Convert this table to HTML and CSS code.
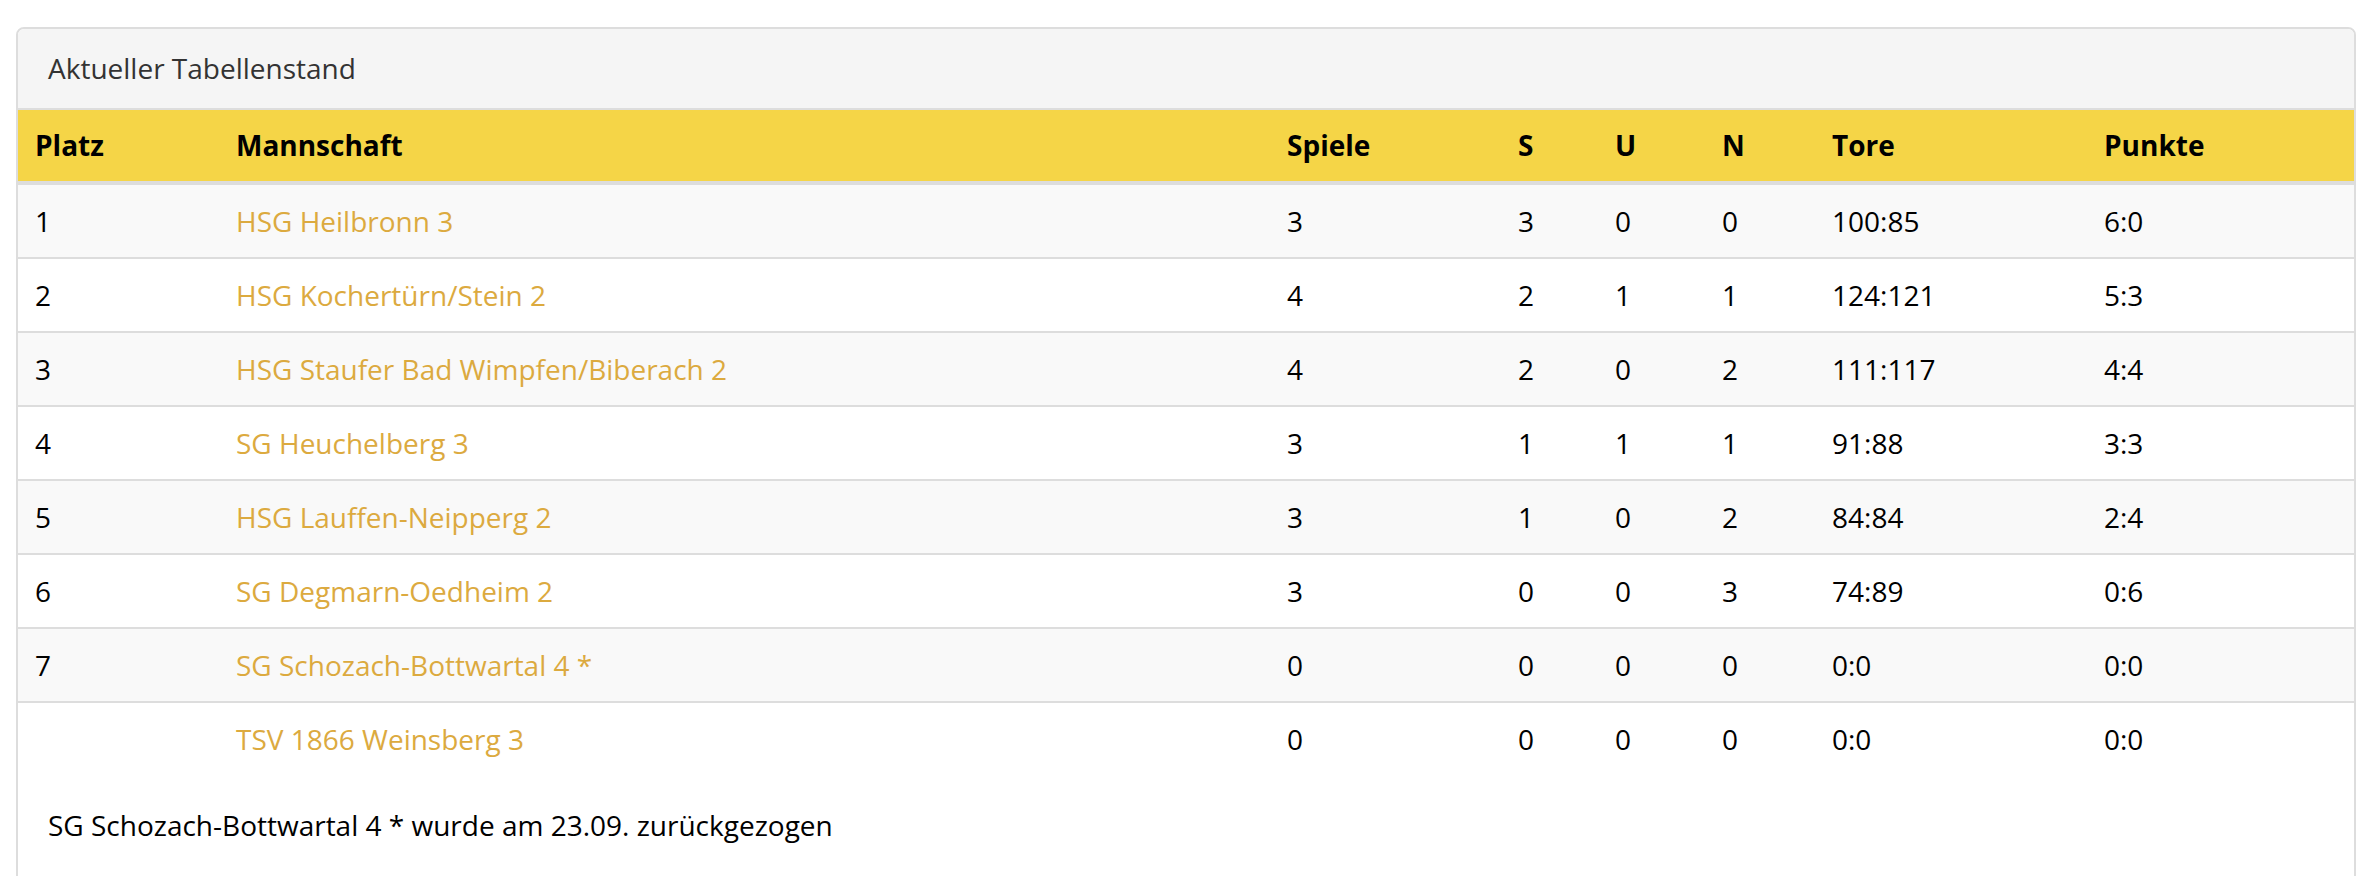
FILE: index.html
```html
<!DOCTYPE html>
<html lang="de">
<head>
<meta charset="utf-8">
<title>Aktueller Tabellenstand</title>
<link rel="stylesheet" href="styles.css">
</head>
<body>
<div class="panel">
  <div class="panel-heading">Aktueller Tabellenstand</div>
  <table class="table">
    <colgroup>
      <col class="c-platz"><col class="c-team"><col class="c-spiele"><col class="c-s"><col class="c-u"><col class="c-n"><col class="c-tore"><col class="c-punkte">
    </colgroup>
    <thead>
      <tr><th>Platz</th><th>Mannschaft</th><th>Spiele</th><th>S</th><th>U</th><th>N</th><th>Tore</th><th>Punkte</th></tr>
    </thead>
    <tbody>
      <tr><td>1</td><td><a href="#">HSG Heilbronn 3</a></td><td>3</td><td>3</td><td>0</td><td>0</td><td>100:85</td><td>6:0</td></tr>
      <tr><td>2</td><td><a href="#">HSG Kochertürn/Stein 2</a></td><td>4</td><td>2</td><td>1</td><td>1</td><td>124:121</td><td>5:3</td></tr>
      <tr><td>3</td><td><a href="#">HSG Staufer Bad Wimpfen/Biberach 2</a></td><td>4</td><td>2</td><td>0</td><td>2</td><td>111:117</td><td>4:4</td></tr>
      <tr><td>4</td><td><a href="#">SG Heuchelberg 3</a></td><td>3</td><td>1</td><td>1</td><td>1</td><td>91:88</td><td>3:3</td></tr>
      <tr><td>5</td><td><a href="#">HSG Lauffen-Neipperg 2</a></td><td>3</td><td>1</td><td>0</td><td>2</td><td>84:84</td><td>2:4</td></tr>
      <tr><td>6</td><td><a href="#">SG Degmarn-Oedheim 2</a></td><td>3</td><td>0</td><td>0</td><td>3</td><td>74:89</td><td>0:6</td></tr>
      <tr><td>7</td><td><a href="#">SG Schozach-Bottwartal 4 *</a></td><td>0</td><td>0</td><td>0</td><td>0</td><td>0:0</td><td>0:0</td></tr>
      <tr><td></td><td><a href="#">TSV 1866 Weinsberg 3</a></td><td>0</td><td>0</td><td>0</td><td>0</td><td>0:0</td><td>0:0</td></tr>
    </tbody>
  </table>
  <div class="panel-body">SG Schozach-Bottwartal 4 * wurde am 23.09. zurückgezogen</div>
</div>
</body>
</html>
```

FILE: styles.css
```css
html, body {
  margin: 0;
  padding: 0;
  background: #fff;
}

body {
  font-family: "Open Sans", "Liberation Sans", sans-serif;
  font-size: 28px;
  line-height: 40px;
  color: #000;
}

.panel {
  margin: 27px 16px 0;
  border: 2px solid #ddd;
  border-radius: 8px;
  background: #fff;
  overflow: hidden;
}

.panel-heading {
  padding: 19px 30px 20px;
  background: #f5f5f5;
  border-bottom: 2px solid #ddd;
  color: #333;
}

.table {
  width: 100%;
  border-collapse: collapse;
  table-layout: fixed;
}

.c-platz { width: 201px; }
.c-team { width: 1051px; }
.c-spiele { width: 231px; }
.c-s { width: 97px; }
.c-u { width: 107px; }
.c-n { width: 110px; }
.c-tore { width: 272px; }
.c-punkte { width: 267px; }

.table th {
  text-align: left;
  font-weight: 700;
  padding: 15px 15px 16px 17px;
  background: #f5d547;
  border-bottom: 4px solid #ddd;
  color: #000;
}

.table td {
  padding: 16px 15px 16px 17px;
  border-top: 2px solid #ddd;
  white-space: nowrap;
}

.table tbody tr:nth-child(odd) td {
  background: #f9f9f9;
}

.table a {
  color: #dcaa3f;
  text-decoration: none;
}

.panel-body {
  padding: 30px 30px 40px;
  color: #000;
}
```
